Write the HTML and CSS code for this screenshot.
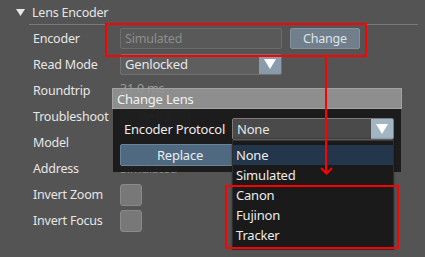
FILE: index.html
```html
<!DOCTYPE html>
<html>
<head>
<meta charset="utf-8">
<link rel="stylesheet" href="styles.css">
</head>
<body>
<div class="panel">
  <div class="header">
    <svg class="caret" width="9" height="7" viewBox="0 0 9 7"><path d="M0 0H9L4.5 7Z" fill="#e8e8e8"/></svg>
    <span class="title">Lens Encoder</span>
  </div>
  <div class="sep"></div>
  <div class="rows">
    <div class="label">Encoder</div>
    <div class="value">
      <div class="input">Simulated</div>
      <div class="btn">Change</div>
    </div>
    <div class="label">Read Mode</div>
    <div class="value">
      <div class="select"><span class="sel-text">Genlocked</span><span class="sel-arrow"><svg width="12" height="10" viewBox="0 0 12 10"><path d="M0 0H12L6 10Z" fill="#fff"/></svg></span></div>
    </div>
    <div class="label">Roundtrip</div>
    <div class="value"><span class="plain up">31.0 ms</span></div>
    <div class="label">Troubleshoot</div>
    <div class="value"><div class="btn reset">Reset</div></div>
    <div class="label">Model</div>
    <div class="value"></div>
    <div class="label">Address</div>
    <div class="value"><span class="plain faint">Simulated</span></div>
    <div class="label">Invert Zoom</div>
    <div class="value"><div class="check"></div></div>
    <div class="label">Invert Focus</div>
    <div class="value"><div class="check"></div></div>
  </div>

  <div class="dialog">
    <div class="dlg-title">Change Lens</div>
    <div class="dlg-body">
      <div class="dlg-row">
        <span class="dlg-label">Encoder Protocol</span>
        <div class="select dark"><span class="sel-text">None</span><span class="sel-arrow light"><svg width="12" height="10" viewBox="0 0 12 10"><path d="M0 0H12L6 10Z" fill="#fff"/></svg></span></div>
      </div>
      <div class="btn replace">Replace</div>
    </div>
  </div>

  <div class="list">
    <div class="item active">None</div>
    <div class="item">Simulated</div>
    <div class="item">Canon</div>
    <div class="item">Fujinon</div>
    <div class="item">Tracker</div>
  </div>

  <div class="mark mark-top"></div>
  <div class="mark mark-bottom"></div>
  <div class="arrow-line"></div>
  <svg class="arrow-head" width="13" height="8" viewBox="0 0 13 8"><path d="M1 1L6.5 6.5L12 1" fill="none" stroke="#ff0000" stroke-width="2"/></svg>
</div>
</body>
</html>
```

FILE: styles.css
```css
html, body {
  margin: 0;
  padding: 0;
  background: #545454;
}
.panel {
  position: relative;
  width: 425px;
  height: 257px;
  overflow: hidden;
  font-family: "Noto Sans", "DejaVu Sans", sans-serif;
  font-size: 12.5px;
  letter-spacing: -0.2px;
  color: #e6e6e6;
}
.header {
  height: 24px;
  display: flex;
  align-items: center;
  padding-left: 16px;
}
.caret {
  margin-right: 7px;
  margin-top: 1px;
}
.title {
  font-size: 12.5px;
}
.sep {
  height: 1px;
  margin-left: 29px;
  width: 389px;
  background: #7a7a7a;
}
.rows {
  display: grid;
  grid-template-columns: 87px 1fr;
  grid-auto-rows: 26px;
  padding-left: 33px;
}
.label, .value {
  display: flex;
  align-items: center;
}
.value {
  gap: 8px;
}
.input {
  box-sizing: border-box;
  width: 162px;
  height: 21px;
  border: 1px solid #6c6c6c;
  border-radius: 2px;
  background: #595959;
  color: #8c8c8c;
  padding-left: 4px;
  display: flex;
  align-items: center;
  margin-top: 1px;
}
.btn {
  box-sizing: border-box;
  width: 70px;
  height: 21px;
  border: 1px solid #8391a0;
  border-radius: 2px;
  background: #717f8c;
  color: #dde3e8;
  display: flex;
  align-items: center;
  justify-content: center;
  margin-top: 1px;
}
.btn.reset {
  height: 23px;
  background: #6a6a6a;
  border-color: #7a7a7a;
  color: #8a8a8a;
}
.select {
  box-sizing: border-box;
  width: 162px;
  height: 21px;
  border: 1px solid #707070;
  border-radius: 2px;
  background: #5e5e5e;
  display: flex;
  align-items: stretch;
  overflow: hidden;
}
.sel-text {
  flex: 1;
  display: flex;
  align-items: center;
  padding-left: 4px;
  font-size: 13px;
}
.sel-arrow {
  width: 22px;
  background: #8a9cab;
  display: flex;
  align-items: center;
  justify-content: center;
}
.sel-arrow.light {
  background: #a2b5c3;
}
.plain {
  color: #9a9a9a;
}
.plain.up {
  margin-top: -3px;
}
.plain.faint {
  color: #8a8a8a;
}
.check {
  box-sizing: border-box;
  width: 22px;
  height: 22px;
  border: 1px solid #8a8a8a;
  border-radius: 3px;
  background: #787878;
  margin-top: 1px;
}

/* dialog overlay */
.dialog {
  position: absolute;
  left: 112px;
  top: 88px;
  width: 290px;
}
.dlg-title {
  box-sizing: border-box;
  height: 21px;
  background: rgba(150, 150, 150, 0.88);
  border: 1px solid #a2a2a2;
  color: #f2f2f2;
  font-size: 13px;
  display: flex;
  align-items: center;
  padding-left: 4px;
}
.dlg-body {
  margin: 0 1px;
  height: 63px;
  background: rgba(24, 24, 24, 0.92);
  padding: 9px 7px 0 7px;
  box-sizing: border-box;
}
.dlg-row {
  display: flex;
  align-items: center;
  height: 22px;
}
.dlg-label {
  width: 108px;
  padding-left: 4px;
  font-size: 13px;
  color: #ececec;
}
.select.dark {
  height: 22px;
  background: #4a4a4a;
  border-color: #7c7c7c;
}
.btn.replace {
  width: 120px;
  height: 22px;
  margin-top: 4px;
  background: #4f6a80;
  border-color: #6a8397;
  color: #e8eef2;
  font-size: 13px;
}

/* dropdown list */
.list {
  position: absolute;
  left: 232px;
  top: 140px;
  width: 162px;
  height: 110px;
  box-sizing: border-box;
  background: #1a1a1a;
  border: 1px solid #2e2e2e;
  border-top-color: #3a3a3a;
  padding-top: 4px;
  box-shadow: 0 -1px 2px rgba(0,0,0,0.4);
}
.item {
  height: 20px;
  display: flex;
  align-items: center;
  padding-left: 3px;
  font-size: 13px;
  color: #ececec;
}
.item.active {
  background: #23364b;
}

/* red annotations */
.mark {
  position: absolute;
  border: 2px solid #ff0000;
  box-sizing: border-box;
}
.mark-top {
  left: 105px;
  top: 23px;
  width: 262px;
  height: 34px;
}
.mark-bottom {
  left: 225px;
  top: 185px;
  width: 174px;
  height: 64px;
}
.arrow-line {
  position: absolute;
  left: 325px;
  top: 57px;
  width: 2px;
  height: 117px;
  background: #ff0000;
}
.arrow-head {
  position: absolute;
  left: 319.5px;
  top: 167px;
}
```
